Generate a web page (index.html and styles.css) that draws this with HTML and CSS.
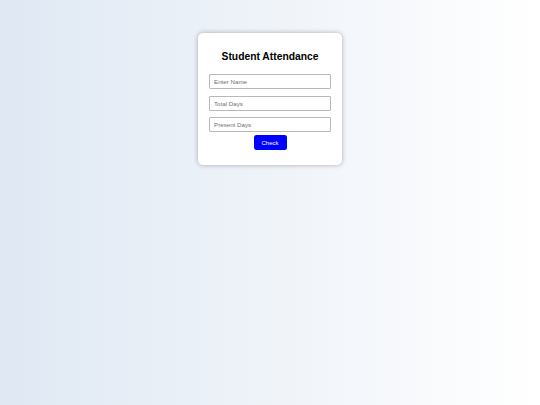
FILE: index.html
```html
<!DOCTYPE html>
<html lang="en">
<head>
<meta charset="utf-8">
<title>Student Attendance</title>
<link rel="stylesheet" href="styles.css">
</head>
<body>
<div class="card">
  <h2 class="title">Student Attendance</h2>
  <input class="field" type="text" placeholder="Enter Name">
  <input class="field" type="number" placeholder="Total Days">
  <input class="field" type="number" placeholder="Present Days">
  <button class="btn" type="button">Check</button>
</div>
</body>
</html>
```
FILE: styles.css
```css
html, body {
  margin: 0;
  height: 100%;
}
body {
  background: linear-gradient(to right, #dfe8f3, #ffffff);
  font-family: "Liberation Sans", Arial, sans-serif;
  padding-top: 33px;
  box-sizing: border-box;
}
.card {
  width: 144px;
  height: 132px;
  box-sizing: border-box;
  margin-left: 198px;
  background: #fff;
  border-radius: 5px;
  box-shadow: 0 0 5px rgba(0,0,0,0.3);
  padding: 15px 10.5px 0;
  display: flex;
  flex-direction: column;
  align-items: center;
}
.title {
  margin: 0 0 8px;
  font-size: 10.3px;
  font-weight: bold;
  color: #000;
  line-height: 18px;
}
.field {
  width: 122px;
  height: 15px;
  box-sizing: border-box;
  margin: 0 0 6.5px;
  padding: 0 4px;
  border: 1px solid #b8b8b8;
  border-radius: 1px;
  font-family: "Liberation Sans", Arial, sans-serif;
  font-size: 6.2px;
  outline: none;
  -moz-appearance: textfield;
}
.field::-webkit-outer-spin-button,
.field::-webkit-inner-spin-button {
  -webkit-appearance: none;
  margin: 0;
}
.field::placeholder {
  color: #707070;
}
.field:last-of-type {
  margin-bottom: 3px;
}
.btn {
  width: 33px;
  height: 15px;
  padding: 0;
  border: none;
  border-radius: 2.5px;
  background: #0000ff;
  color: #fff;
  font-family: "Liberation Sans", Arial, sans-serif;
  font-size: 6px;
}
```
